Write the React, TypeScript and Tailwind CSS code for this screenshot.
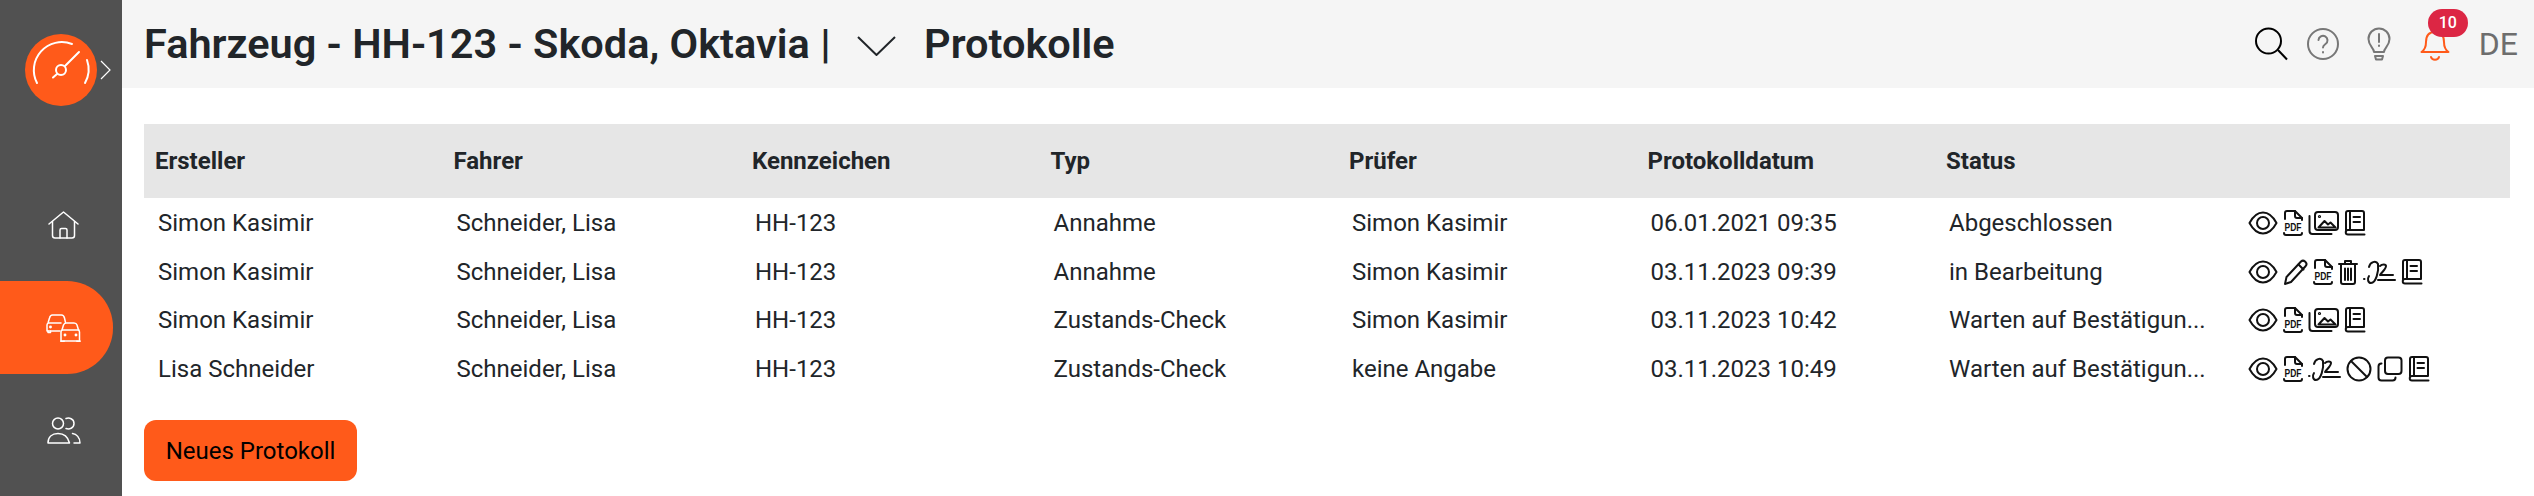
type IconName = "eye" | "pdf" | "image" | "book" | "pencil" | "trash" | "sign" | "ban" | "copy";

const rows: { ersteller: string; pruefer: string; typ: string; datum: string; status: string; icons: IconName[] }[] = [
  { ersteller: "Simon Kasimir", typ: "Annahme", pruefer: "Simon Kasimir", datum: "06.01.2021 09:35", status: "Abgeschlossen", icons: ["eye", "pdf", "image", "book"] },
  { ersteller: "Simon Kasimir", typ: "Annahme", pruefer: "Simon Kasimir", datum: "03.11.2023 09:39", status: "in Bearbeitung", icons: ["eye", "pencil", "pdf", "trash", "sign", "book"] },
  { ersteller: "Simon Kasimir", typ: "Zustands-Check", pruefer: "Simon Kasimir", datum: "03.11.2023 10:42", status: "Warten auf Bestätigun...", icons: ["eye", "pdf", "image", "book"] },
  { ersteller: "Lisa Schneider", typ: "Zustands-Check", pruefer: "keine Angabe", datum: "03.11.2023 10:49", status: "Warten auf Bestätigun...", icons: ["eye", "pdf", "sign", "ban", "copy", "book"] },
];

const columns = ["Ersteller", "Fahrer", "Kennzeichen", "Typ", "Prüfer", "Protokolldatum", "Status", ""];

function RowIcon({ name }: { name: IconName }) {
  const common = { fill: "none", stroke: "#111", strokeWidth: 2, strokeLinecap: "round" as const, strokeLinejoin: "round" as const };
  switch (name) {
    case "eye":
      return (
        <svg width="30" height="26" viewBox="0 0 30 26" {...common}>
          <path d="M1.500 13C5 6.500 9.500 2.500 15 2.500S25 6.500 28.500 13C25 19.500 20.500 23.500 15 23.500S5 19.500 1.500 13Z" />
          <circle cx="15" cy="13" r="6" />
        </svg>
      );
    case "pdf":
      return (
        <svg width="20" height="26" viewBox="0 0 20 26" {...common}>
          <path d="M2 9V3a2 2 0 0 1 2-2h8l7 7v2" />
          <path d="M12 1v5a2 2 0 0 0 2 2h5" />
          <path d="M1 23a2 2 0 0 0 2 2h14a2 2 0 0 0 2-2" />
          <text x="1.500" y="20.500" textLength="17" lengthAdjust="spacingAndGlyphs" fontFamily="Liberation Sans, sans-serif" fontWeight="700" fontSize="11" fill="#111" stroke="none">PDF</text>
        </svg>
      );
    case "image":
      return (
        <svg width="31" height="26" viewBox="0 0 31 26" {...common}>
          <rect x="7" y="2" width="23" height="18" rx="3" />
          <path d="M1.500 6v15a3 3 0 0 0 3 3h19" />
          <path d="M10.500 17.500l6-6.500 3.500 3.500 2.500-2 5 5Z" />
          <circle cx="11.500" cy="6.500" r=".6" />
        </svg>
      );
    case "book":
      return (
        <svg width="22" height="26" viewBox="0 0 22 26" {...common}>
          <path d="M2 20V3a2 2 0 0 1 2-2h14a2 2 0 0 1 2 2v17H4a2 2 0 0 0 0 4.500h16.500" />
          <path d="M6 1v18" />
          <path d="M9.500 7H16M9.500 12H16" />
        </svg>
      );
    case "pencil":
      return (
        <svg width="25" height="28" viewBox="0 0 25 28" {...common}>
          <path d="M2 26l1.500-7L18 3.500a3 3 0 0 1 4 0l.5.5a3 3 0 0 1 0 4.200L8 24Z" />
          <path d="M15.500 6.500l5 5" />
        </svg>
      );
    case "trash":
      return (
        <svg width="20" height="26" viewBox="0 0 20 26" {...common}>
          <path d="M1 5h18M7 5V2h6v3" />
          <path d="M3 5v18a2 2 0 0 0 2 2h10a2 2 0 0 0 2-2V5" />
          <path d="M7 9.500V21M10 9.500V21M13 9.500V21" />
        </svg>
      );
    case "sign":
      return (
        <svg width="33" height="26" viewBox="0 0 33 26" {...common}>
          <path d="M1 20h.5" />
          <path d="M6 8C7 3 13 1 15 5 16 12 13 24 8 24 5 24 4 20 6 17" />
          <path d="M17 7c2-2 6-2 6 0 0 3-4 6-6 9h13" />
          <path d="M15 21h17" />
        </svg>
      );
    case "ban":
      return (
        <svg width="26" height="26" viewBox="0 0 26 26" {...common}>
          <circle cx="13" cy="13" r="11.500" />
          <path d="M5 5l16 16" />
        </svg>
      );
    case "copy":
      return (
        <svg width="26" height="26" viewBox="0 0 26 26" {...common}>
          <rect x="8" y="1.500" width="16.500" height="16.500" rx="3" />
          <path d="M4.500 7.500a3 3 0 0 0-3 3v11a3 3 0 0 0 3 3h11a3 3 0 0 0 3-3" />
        </svg>
      );
  }
}

function Sidebar() {
  return (
    <aside className="flex w-[122px] shrink-0 flex-col bg-[#515151]">
      <div className="flex items-center pl-[25px] pt-[34px]">
        {/* Logo */}
        <div className="h-[72px] w-[72px] rounded-full bg-[#ff5a1a]">
          <svg width="72" height="72" viewBox="0 0 72 72" fill="none" stroke="#fff" strokeWidth="2" strokeLinecap="round">
            <path d="M12 49A28 28 0 0 1 47 10" />
            <path d="M62 26A28 28 0 0 1 60 49" />
            <circle cx="36" cy="36" r="5" />
            <path d="M40 32 54 18M32 40l-4 3.500" />
          </svg>
        </div>
        <svg className="ml-[3px]" width="11" height="20" viewBox="0 0 11 20" fill="none" stroke="#fff" strokeWidth="1.200">
          <path d="M1 1l9 9-9 9" />
        </svg>
      </div>
      <nav className="flex flex-col">
        <div className="mt-[105px] flex h-[28px] items-center pl-[48px]">
          <svg width="31" height="28" viewBox="0 0 31 28" fill="none" stroke="#fff" strokeWidth="1.500" strokeLinejoin="round" strokeLinecap="round">
            <path d="M1 13 15.500 1 30 13" />
            <path d="M4.500 10.500v14a2.500 2.500 0 0 0 2.500 2.500h17a2.500 2.500 0 0 0 2.500-2.500v-14" />
            <path d="M12 27v-8a1.500 1.500 0 0 1 1.500-1.500h4A1.500 1.500 0 0 1 19 19v8" />
          </svg>
        </div>
        <div className="mt-[42px] flex h-[93px] w-[113px] items-center rounded-r-[46px] bg-[#ff5a1a] pl-[46px]">
          <svg width="35" height="28" viewBox="0 0 35 28" fill="none" stroke="#fff" strokeWidth="1.500" strokeLinejoin="round" strokeLinecap="round">
            <path d="M14 17H1V11c0-1 .5-1.500 1-2l1.500-5C4 2 5 1 6.500 1h9C17 1 18 2 18.500 4l1 4.500" />
            <path d="M2.500 9H15M2 17v1.500h2.500V17" />
            <path d="M15 27V18c0-1 .5-1.500 1-2l1.500-5C18 9.500 19 9 20.500 9h7.500c1.500 0 2.500.5 3 2l1.500 5c.5.5 1 1 1 2v9Z" />
            <path d="M16 16h17M15 27v.5h3V27M31 27v.5h3V27" />
            <circle cx="19" cy="21" r=".7" />
            <circle cx="30" cy="21" r=".7" />
            <circle cx="4.500" cy="13" r=".7" />
          </svg>
        </div>
        <div className="mt-[43px] flex items-center pl-[47px]">
          <svg width="34" height="27" viewBox="0 0 34 27" fill="none" stroke="#fff" strokeWidth="1.500" strokeLinecap="round" strokeLinejoin="round">
            <circle cx="11" cy="6.500" r="5.500" />
            <path d="M19 1.500c3-1 8 0 8 5s-5 6-8 5" />
            <path d="M1 26c0-6 4-9.500 10-9.500S21 20 22.500 26Z" />
            <path d="M25.500 16.500c4 .5 7.500 4 7.500 9.500h-6" />
          </svg>
        </div>
      </nav>
    </aside>
  );
}

function Topbar() {
  return (
    <header className="flex h-[88px] items-center bg-[#f5f5f5] pl-[22px] pr-[16px]">
      <h1 className="flex items-center text-[41.500px] font-semibold text-[#212529]">
        <span className="w-[713px] whitespace-nowrap">Fahrzeug - HH-123 - Skoda, Oktavia |</span>
        <svg className="mt-[4px]" width="39" height="20" viewBox="0 0 39 20" fill="none" stroke="#212529" strokeWidth="2">
          <path d="M1 1l18.500 18L38 1" />
        </svg>
        <span className="ml-[28px] whitespace-nowrap">Protokolle</span>
      </h1>
      <div className="ml-auto flex items-center">
        <svg width="34" height="34" viewBox="0 0 34 34" fill="none" stroke="#000" strokeWidth="2">
          <circle cx="14.500" cy="14" r="12.500" />
          <path d="M24 23l9 9.500" />
        </svg>
        <svg className="ml-[18px]" width="34" height="34" viewBox="0 0 34 34" fill="none" stroke="#777" strokeWidth="2" strokeLinecap="round">
          <circle cx="17" cy="17" r="15" />
          <path d="M12.500 13a4.500 4.500 0 1 1 7 4c-1.500 1-2.500 1.500-2.500 3.500" />
          <path d="M17 25v.5" />
        </svg>
        <svg className="ml-[27px]" width="24" height="34" viewBox="0 0 24 34" fill="none" stroke="#777" strokeWidth="2" strokeLinecap="round" strokeLinejoin="round">
          <path d="M7 25c0-4-5.500-6-5.500-13A10.500 10.500 0 0 1 22.500 12C22.500 19 17 21 17 25Z" />
          <path d="M12 7v8M12 18.500v.5" />
          <path d="M8 29h8l-1 3.500H9Z" />
        </svg>
        <div className="relative ml-[29px] h-[34px] w-[30px]">
          <svg width="30" height="34" viewBox="0 0 30 34" fill="none" stroke="#ff5a1a" strokeWidth="2" strokeLinecap="round" strokeLinejoin="round">
            <path d="M1.500 25c3-2 4.500-5 4.500-10 0-6 3-10 9-10s9 4 9 10c0 5 1.500 8 4.500 10Z" />
            <path d="M11 30c1 3.500 7 3.500 8 0" />
          </svg>
          {/* Badge */}
          <span className="absolute left-[8px] top-[-18px] flex h-[28px] w-[40px] items-center justify-center rounded-full bg-[#dc2644] text-[16px] font-medium text-white">10</span>
        </div>
        <span className="ml-[29px] text-[32px] text-[#6d6d6d]">DE</span>
      </div>
    </header>
  );
}

function ProtokollTable() {
  return (
    <div className="flex flex-col">
      <div className="grid h-[74px] grid-cols-[repeat(7,298.5px)_1fr] items-center bg-[#e6e6e6] pl-[11px] text-[24px] font-bold text-[#212529]">
        {columns.map((col) => (
          <div key={col || "aktionen"}>{col}</div>
        ))}
      </div>
      {rows.map((row, i) => (
        <div key={i} className="grid h-[48.500px] grid-cols-[repeat(7,298.5px)_1fr] items-center pl-[14px] pt-[2px] text-[24px] text-[#212529]">
          <div>{row.ersteller}</div>
          <div>Schneider, Lisa</div>
          <div>HH-123</div>
          <div>{row.typ}</div>
          <div>{row.pruefer}</div>
          <div>{row.datum}</div>
          <div className="whitespace-nowrap">{row.status}</div>
          <div className="flex items-center gap-[5px]">
            {row.icons.map((name, k) => (
              <RowIcon key={k} name={name} />
            ))}
          </div>
        </div>
      ))}
    </div>
  );
}

export default function App() {
  return (
    <div className="flex h-[496px] w-[2534px] bg-white font-['Roboto',sans-serif]">
      <Sidebar />
      <main className="flex min-w-0 flex-1 flex-col">
        <Topbar />
        <div className="flex flex-col items-start pl-[22px] pr-[24px] pt-[36px]">
          <div className="w-full">
            <ProtokollTable />
          </div>
          <button className="mt-[28px] h-[61px] w-[213px] rounded-[12px] bg-[#ff5a1a] text-[24px] text-black">Neues Protokoll</button>
        </div>
      </main>
    </div>
  );
}
